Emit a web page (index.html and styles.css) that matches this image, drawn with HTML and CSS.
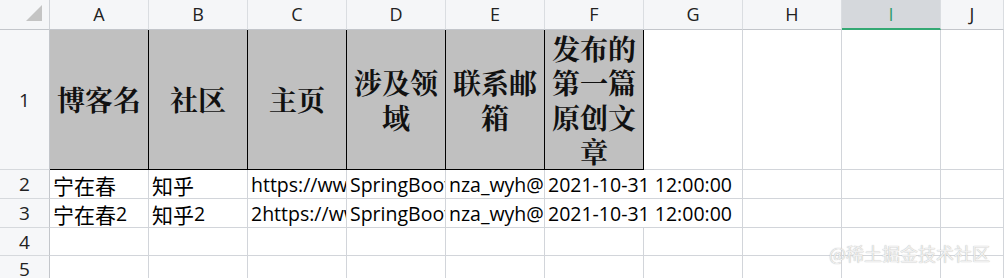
FILE: index.html
```html
<!DOCTYPE html>
<html>
<head>
<meta charset="utf-8">
<link rel="stylesheet" href="styles.css">
</head>
<body>
<div class="sheet">
  <div class="corner"><span class="tri"></span></div>
  <div class="colh">A</div>
  <div class="colh">B</div>
  <div class="colh">C</div>
  <div class="colh">D</div>
  <div class="colh">E</div>
  <div class="colh">F</div>
  <div class="colh">G</div>
  <div class="colh">H</div>
  <div class="colh sel">I</div>
  <div class="colh">J</div>

  <div class="rowh">1</div>
  <div class="cell title">博客名</div>
  <div class="cell title">社区</div>
  <div class="cell title">主页</div>
  <div class="cell title">涉及领域</div>
  <div class="cell title">联系邮箱</div>
  <div class="cell title">发布的第一篇原创文章</div>
  <div class="cell"></div>
  <div class="cell"></div>
  <div class="cell"></div>
  <div class="cell"></div>

  <div class="rowh">2</div>
  <div class="cell data"><span class="zh">宁在春</span></div>
  <div class="cell data"><span class="zh">知乎</span></div>
  <div class="cell data">https://www.zhihu.com</div>
  <div class="cell data">SpringBoot</div>
  <div class="cell data">nza_wyh@163.com</div>
  <div class="cell data wide">2021-10-31 12:00:00</div>
  <div class="cell"></div>
  <div class="cell"></div>
  <div class="cell"></div>

  <div class="rowh">3</div>
  <div class="cell data"><span class="zh">宁在春</span>2</div>
  <div class="cell data"><span class="zh">知乎</span>2</div>
  <div class="cell data">2https://www.zhihu.com</div>
  <div class="cell data">SpringBoot</div>
  <div class="cell data">nza_wyh@163.com</div>
  <div class="cell data wide">2021-10-31 12:00:00</div>
  <div class="cell"></div>
  <div class="cell"></div>
  <div class="cell"></div>

  <div class="rowh">4</div>
  <div class="cell"></div>
  <div class="cell"></div>
  <div class="cell"></div>
  <div class="cell"></div>
  <div class="cell"></div>
  <div class="cell"></div>
  <div class="cell"></div>
  <div class="cell"></div>
  <div class="cell"></div>
  <div class="cell"></div>

  <div class="rowh">5</div>
  <div class="cell"></div>
  <div class="cell"></div>
  <div class="cell"></div>
  <div class="cell"></div>
  <div class="cell"></div>
  <div class="cell"></div>
  <div class="cell"></div>
  <div class="cell"></div>
  <div class="cell"></div>
  <div class="cell"></div>
</div>
<div class="watermark">@稀土掘金技术社区</div>
</body>
</html>
```

FILE: styles.css
```css
html, body {
  margin: 0;
  padding: 0;
  background: #ffffff;
  width: 1004px;
  height: 278px;
  overflow: hidden;
  position: relative;
}

.sheet {
  display: grid;
  grid-template-columns: 50px repeat(9, 99px) 1fr;
  grid-template-rows: 30px 140px 29px 29px 28px 1fr;
  height: 278px;
  font-family: "Open Sans", "Noto Sans CJK SC", sans-serif;
  color: #111;
}

.sheet > div {
  box-sizing: border-box;
}

.corner {
  background: #f5f6f8;
  border-right: 1px solid #d0d3d8;
  border-bottom: 1px solid #c3c6cb;
  position: relative;
}

.tri {
  position: absolute;
  left: 26px;
  top: 5px;
  width: 0;
  height: 0;
  border-left: 16px solid transparent;
  border-bottom: 16px solid #c4c4c4;
}

.colh {
  background: #f5f6f8;
  border-right: 1px solid #dadde1;
  border-bottom: 1px solid #c3c6cb;
  display: flex;
  align-items: center;
  justify-content: center;
  font-size: 18px;
  color: #222;
  padding-bottom: 1px;
}

.colh.sel {
  background: #d5d8dc;
  border-bottom: 2px solid #34a873;
  color: #2f9e6c;
  padding-bottom: 0;
}

.rowh {
  background: #f6f7f9;
  border-right: 1px solid #c3c6cb;
  border-bottom: 1px solid #d6d9dd;
  display: flex;
  align-items: center;
  justify-content: center;
  font-size: 19px;
  color: #222;
}

.cell {
  border-right: 1px solid #d2d5da;
  border-bottom: 1px solid #d2d5da;
  overflow: hidden;
  white-space: nowrap;
}

.cell.title {
  background: #c0c0c0;
  border-right: 1px solid #000;
  border-bottom: 1px solid #000;
  display: flex;
  align-items: center;
  justify-content: center;
  text-align: center;
  white-space: normal;
  font-family: "Noto Serif CJK SC", "Noto Sans CJK SC", serif;
  font-weight: 700;
  font-size: 28px;
  line-height: 34.5px;
  padding: 0 4px;
  color: #111;
}

.cell.data {
  display: flex;
  align-items: flex-end;
  font-size: 19.5px;
  line-height: 26px;
  padding: 0 0 0 3px;
  color: #000;
}

.cell.wide {
  grid-column: span 2;
}

.zh {
  font-family: "Noto Sans CJK SC", sans-serif;
  font-size: 21px;
  font-weight: 400;
}

.watermark {
  position: absolute;
  right: 14px;
  bottom: 12px;
  font-family: "Noto Sans CJK SC", sans-serif;
  font-size: 18px;
  color: #f0f0f0;
  text-shadow: 0 0 1px #a6a6a6;
}
```
